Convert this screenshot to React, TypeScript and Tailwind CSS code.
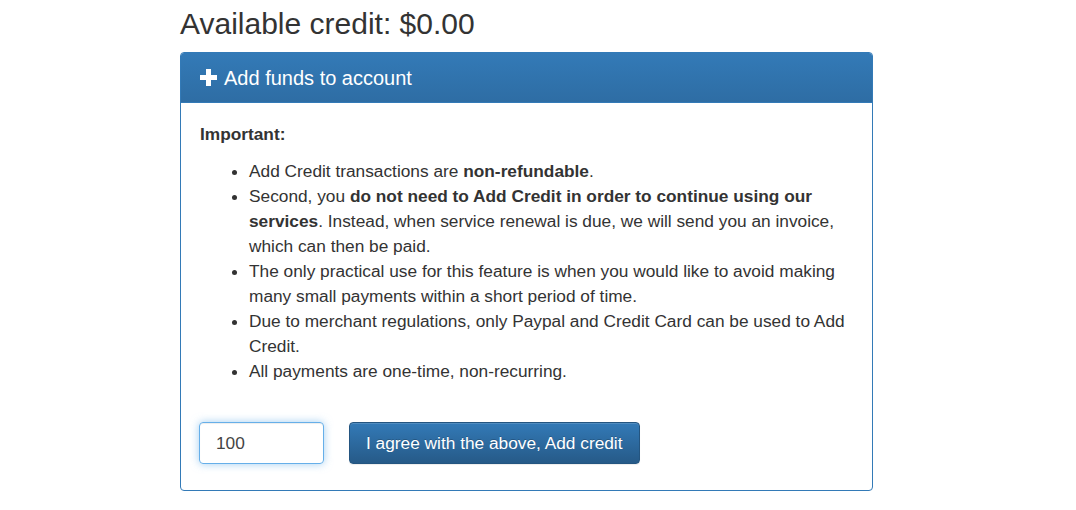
import React, { useState } from 'react';

export default function App() {
  const [amount, setAmount] = useState('100');

  return (
    <div className="min-h-[510px] bg-white text-[#333] font-['Liberation_Sans',Arial,sans-serif]">
      <div className="ml-[180px] w-[693px]">
        <h2 className="pt-[6px] text-[30px] leading-[36px] text-[#333]">Available credit: $0.00</h2>

        <div className="mt-[10px] rounded-[4px] border border-[#337ab7] overflow-hidden">
          <div className="h-[50px] flex items-center px-[19px] text-white bg-gradient-to-b from-[#337ab7] to-[#2e6da4] border-b border-[#337ab7]">
            <svg width="17" height="17" viewBox="0 0 17 17" className="mr-[7px]">
              <path d="M6 0h5v6h6v5h-6v6H6v-6H0V6h6z" fill="#fff" />
            </svg>
            <span className="text-[20px] leading-[22px]">Add funds to account</span>
          </div>

          <div className="pl-[19px] pr-[16px] pt-[19px] pb-[26px] text-[17.3px] leading-[25px]">
            <p className="font-bold">Important:</p>
            <ul className="list-disc pl-[49px] mt-[12px]">
              <li>
                Add Credit transactions are <b>non-refundable</b>.
              </li>
              <li>
                Second, you <b>do not need to Add Credit in order to continue using our services</b>. Instead, when service renewal is due, we will send you an invoice, which can then be paid.
              </li>
              <li>
                The only practical use for this feature is when you would like to avoid making many small payments within a short period of time.
              </li>
              <li>
                Due to merchant regulations, only Paypal and Credit Card can be used to Add Credit.
              </li>
              <li>All payments are one-time, non-recurring.</li>
            </ul>

            <div className="flex items-center gap-[25px] mt-[38px]">
              <input
                autoFocus
                value={amount}
                onChange={(e) => setAmount(e.target.value)}
                className="w-[125px] h-[42px] ml-[-1px] rounded-[4px] border border-[#66afe9] px-[16px] text-[17.3px] text-[#444] outline-none caret-[#333] shadow-[inset_0_1px_1px_rgba(0,0,0,0.075),0_0_8px_rgba(102,175,233,0.6)]"
              />
              <button className="h-[42px] px-[16px] rounded-[4px] border border-[#245580] text-white text-[17.3px] bg-gradient-to-b from-[#337ab7] to-[#265a88] shadow-[inset_0_1px_0_rgba(255,255,255,0.15),0_1px_1px_rgba(0,0,0,0.075)] [text-shadow:0_-1px_0_rgba(0,0,0,0.2)]">
                I agree with the above, Add credit
              </button>
            </div>
          </div>
        </div>
      </div>
    </div>
  );
}
